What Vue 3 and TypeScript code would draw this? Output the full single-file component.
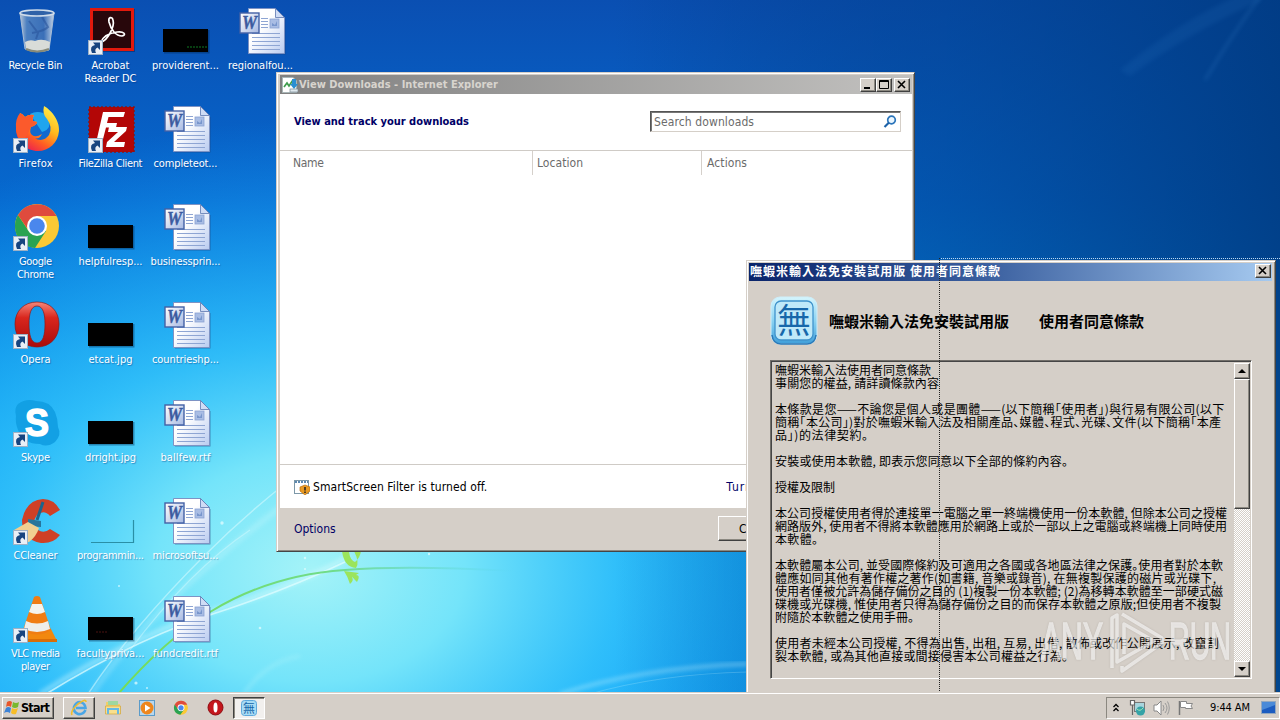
<script setup lang="ts">
type IconKind =
  | 'bin' | 'acrobat' | 'thumb' | 'word' | 'firefox' | 'filezilla'
  | 'chrome' | 'opera' | 'skype' | 'ccleaner' | 'blank' | 'vlc'

interface Shortcut {
  kind: IconKind
  col: number
  row: number
  lines: [string, number][]
  linked?: boolean
  accent?: string
}

const icons: Shortcut[] = [
  { kind: 'bin', col: 1, row: 1, lines: [['Recycle Bin', 54]] },
  { kind: 'acrobat', col: 2, row: 1, lines: [['Acrobat', 38], ['Reader DC', 52]], linked: true },
  { kind: 'thumb', col: 3, row: 1, lines: [['providerent...', 67]], accent: 'green' },
  { kind: 'word', col: 4, row: 1, lines: [['regionalfou...', 65]] },
  { kind: 'firefox', col: 1, row: 2, lines: [['Firefox', 34]], linked: true },
  { kind: 'filezilla', col: 2, row: 2, lines: [['FileZilla Client', 64]], linked: true },
  { kind: 'word', col: 3, row: 2, lines: [['completeot...', 64]] },
  { kind: 'chrome', col: 1, row: 3, lines: [['Google', 33], ['Chrome', 37]], linked: true },
  { kind: 'thumb', col: 2, row: 3, lines: [['helpfulresp...', 64]] },
  { kind: 'word', col: 3, row: 3, lines: [['businessprin...', 70]] },
  { kind: 'opera', col: 1, row: 4, lines: [['Opera', 30]], linked: true },
  { kind: 'thumb', col: 2, row: 4, lines: [['etcat.jpg', 44]] },
  { kind: 'word', col: 3, row: 4, lines: [['countrieshp...', 67]] },
  { kind: 'skype', col: 1, row: 5, lines: [['Skype', 29]], linked: true },
  { kind: 'thumb', col: 2, row: 5, lines: [['drright.jpg', 51]] },
  { kind: 'word', col: 3, row: 5, lines: [['ballfew.rtf', 50]] },
  { kind: 'ccleaner', col: 1, row: 6, lines: [['CCleaner', 44]], linked: true },
  { kind: 'blank', col: 2, row: 6, lines: [['programmin...', 67]] },
  { kind: 'word', col: 3, row: 6, lines: [['microsoftsu...', 66]] },
  { kind: 'vlc', col: 1, row: 7, lines: [['VLC media', 49], ['player', 29]], linked: true },
  { kind: 'thumb', col: 2, row: 7, lines: [['facultypriva...', 68]], accent: 'red' },
  { kind: 'word', col: 3, row: 7, lines: [['fundcredit.rtf', 65]] },
]

const licence: [string, number][] = [
  ['嘸蝦米輸入法使用者同意條款', 156],
  ['事關您的權益, 請詳讀條款內容', 164],
  ['', 0],
  ['本條款是您——不論您是個人或是團體——(以下簡稱「使用者」)與行易有限公司(以下', 450],
  ['簡稱「本公司」)對於嘸蝦米輸入法及相關產品、媒體、程式、光碟、文件(以下簡稱「本產', 446],
  ['品」)的法律契約。', 93],
  ['', 0],
  ['安裝或使用本軟體, 即表示您同意以下全部的條約內容。', 293],
  ['', 0],
  ['授權及限制', 60],
  ['', 0],
  ['本公司授權使用者得於連接單一電腦之單一終端機使用一份本軟體, 但除本公司之授權', 452],
  ['網路版外, 使用者不得將本軟體應用於網路上或於一部以上之電腦或終端機上同時使用', 452],
  ['本軟體。', 43],
  ['', 0],
  ['本軟體屬本公司, 並受國際條約及可適用之各國或各地區法律之保護。使用者對於本軟', 448],
  ['體應如同其他有著作權之著作(如書籍, 音樂或錄音), 在無複製保護的磁片或光碟下,', 441],
  ['使用者僅被允許為儲存備份之目的 (1)複製一份本軟體; (2)為移轉本軟體至一部硬式磁', 448],
  ['碟機或光碟機, 惟使用者只得為儲存備份之目的而保存本軟體之原版;但使用者不複製', 446],
  ['附隨於本軟體之使用手冊。', 139],
  ['', 0],
  ['使用者未經本公司授權, 不得為出售, 出租, 互易, 出借, 散佈或改作公開展示, 改竄割', 444],
  ['裂本軟體, 或為其他直接或間接侵害本公司權益之行為。', 293],
]

// Spreads the letters of a label so that it fills the given width.
const vFit = {
  mounted(el: HTMLElement, { value }: { value: number }) {
    const gaps = (el.textContent ?? '').length - 1
    if (gaps < 1 || !value) return
    const step = (value - el.getBoundingClientRect().width) / gaps
    el.style.letterSpacing = `${step}px`
    el.style.marginRight = `${-step}px`
  },
}
</script>

<template>
  <div class="desktop">
    <svg class="wallpaper" viewBox="0 0 1280 720" width="1280" height="720">
      <defs>
        <linearGradient id="sky" x1="0" y1="0" x2="0" y2="1">
          <stop offset="0" stop-color="#0a4fb2" />
          <stop offset=".28" stop-color="#0669cf" />
          <stop offset=".6" stop-color="#059fee" />
          <stop offset="1" stop-color="#0a9efa" />
        </linearGradient>
        <radialGradient id="glow" gradientUnits="userSpaceOnUse" cx="0" cy="0" r="1" gradientTransform="translate(310 570) scale(620 450)">
          <stop offset="0" stop-color="#a4f3f8" />
          <stop offset=".25" stop-color="#74e4fa" />
          <stop offset=".5" stop-color="#36c4fb" stop-opacity=".85" />
          <stop offset="1" stop-color="#139cf8" stop-opacity="0" />
        </radialGradient>
        <linearGradient id="shade" x1="0" y1="0" x2="1" y2="0">
          <stop offset=".48" stop-color="#00306f" stop-opacity="0" />
          <stop offset=".74" stop-color="#003f8a" stop-opacity=".5" />
          <stop offset="1" stop-color="#003a80" stop-opacity=".88" />
        </linearGradient>
        <linearGradient id="stem" x1="0" y1="0" x2="1" y2="0">
          <stop offset="0" stop-color="#76dc55" />
          <stop offset=".5" stop-color="#70dc8c" />
          <stop offset=".9" stop-color="#50cfe0" stop-opacity="0" />
        </linearGradient>
        <filter id="soft"><feGaussianBlur stdDeviation="2" /></filter>
      </defs>
      <rect width="1280" height="720" fill="url(#sky)" />
      <rect width="1280" height="720" fill="url(#glow)" />
      <rect width="1280" height="720" fill="url(#shade)" />
      <path d="M1120 70Q1180 20 1250 -10L1262 0Q1190 32 1130 76Z" fill="#3f8fd8" opacity=".1" filter="url(#soft)" />
      <path d="M1205 80Q1235 30 1262 -6" stroke="#4d9be0" stroke-width="2" opacity=".25" fill="none" filter="url(#soft)" />
      <g fill="none" stroke="#e2fdff">
        <path d="M40 694Q135 634 225 607Q300 584 350 556" stroke-width="5" opacity=".4" filter="url(#soft)" />
        <path d="M46 694Q140 636 228 609Q290 588 345 562" stroke-width="1.6" opacity=".7" />
        <path d="M88 694Q130 630 205 555Q245 515 290 480" stroke-width="1.4" opacity=".5" />
        <path d="M92 694Q150 605 290 500" stroke-width="6" opacity=".22" filter="url(#soft)" />
        <path d="M130 650Q190 570 250 530" stroke-width="1.2" opacity=".4" />
        <path d="M560 694Q640 668 748 664" stroke-width="3" opacity=".4" filter="url(#soft)" />
        <path d="M590 694Q660 674 748 672" stroke-width="1.2" opacity=".2" />
      </g>
      <path d="M118 694Q165 640 210 612Q270 575 345 570Q420 564 560 574" stroke="url(#stem)" stroke-width="2" fill="none" />
      <path d="M244 694Q265 662 300 656" stroke="#b9f6fb" stroke-width="3" fill="none" opacity=".35" filter="url(#soft)" />
      <g fill="#9be45c">
        <path d="M342 551L349 552Q350 560 355 562Q360 558 361 551L354 551Q360 563 356 568Q344 567 342 551Z" />
        <path d="M344 571L359 573L356 575Q361 575 357 582Q352 577 351 575Q355 580 350 584Q348 577 344 571Z" />
      </g>
      <g fill="#e9feff" opacity=".7">
        <circle cx="222" cy="523" r="1.7" /><circle cx="305" cy="558" r="1.2" /><circle cx="305" cy="569" r="1" />
        <circle cx="136" cy="683" r="1.6" /><circle cx="147" cy="688" r="1" /><circle cx="119" cy="586" r="1" />
        <circle cx="260" cy="628" r="1.3" /><circle cx="429" cy="554" r="1.2" />
      </g>
    </svg>

    <div class="icons">
      <div v-for="(item, i) in icons" :key="i" class="item" :style="{ gridColumn: item.col, gridRow: item.row }">
        <svg class="pic" viewBox="0 0 48 48" width="48" height="48">
          <g v-if="item.kind === 'bin'">
            <defs>
              <linearGradient id="glass" x1="0" y1="0" x2="1" y2="0">
                <stop offset="0" stop-color="#b5c4d6" /><stop offset=".2" stop-color="#4b7fc0" />
                <stop offset=".7" stop-color="#3a6fb8" /><stop offset="1" stop-color="#c3d3e6" />
              </linearGradient>
            </defs>
            <path d="M8 6L13 42Q24 47 37 43L42 6Z" fill="url(#glass)" stroke="#a8bdd6" />
            <path d="M13 35Q18 32 23 34Q30 31 38 35L37 42Q25 46 14 42Z" fill="#d9dcd8" />
            <path d="M17 14L26 26L24 32M30 10L36 20Q32 24 20 26" stroke="#2a559c" stroke-width="2" fill="none" opacity=".6" />
            <path d="M14 42Q25 47 37 42" stroke="#888a78" stroke-width="2" fill="none" />
            <ellipse cx="25" cy="6" rx="17" ry="3" fill="#2f62a8" stroke="#cfdcea" stroke-width="1.6" />
          </g>
          <g v-else-if="item.kind === 'acrobat'">
            <rect x="4" y="2" width="44" height="43" fill="#06245a" opacity=".5" />
            <rect x="3" y="1" width="44" height="43" fill="#e2190d" /><rect x="6" y="4" width="38" height="37" fill="#28070b" />
            <path d="M14 35C20 34 28 20 26 13C25 9 21 10 22 15C24 23 29 29 35 29C40 28 37 24 30 25C22 26 16 30 14 35Z" fill="none" stroke="#fff" stroke-width="1.7" />
          </g>
          <g v-else-if="item.kind === 'thumb'">
            <rect x="2" y="23" width="45.500" height="23.500" fill="#00264a" opacity=".4" />
            <rect x="1" y="22" width="45" height="23" />
            <path v-if="item.accent === 'green'" d="M25 40H46" stroke="#0f7a23" stroke-dasharray="2 1" />
            <path v-if="item.accent === 'red'" d="M9 37H20" stroke="#4b1310" stroke-dasharray="2 1" />
          </g>
          <path v-else-if="item.kind === 'blank'" d="M46.500 23V45.500H4" fill="none" stroke="#2a8fa6" stroke-width="1.200" />
          <g v-else-if="item.kind === 'word'">
            <defs>
              <linearGradient id="sheet" x1="0" y1="0" x2="1" y2="1"><stop offset=".4" stop-color="#fff" /><stop offset="1" stop-color="#b9cbf0" /></linearGradient>
              <linearGradient id="badge" x1="0" y1="0" x2="1" y2="1"><stop offset="0" stop-color="#fff" /><stop offset="1" stop-color="#a7b9e2" /></linearGradient>
            </defs>
            <path d="M13 12H48.500V47.500H13Z" fill="#1c3f7a" opacity=".5" />
            <path d="M11.500 1.500H38.500L47.500 10.500V46.500H11.500Z" fill="url(#sheet)" stroke="#7e93c4" />
            <path d="M38.500 1.500V10.500H47.500Z" fill="#cfdcf5" stroke="#5c76ae" stroke-width=".8" />
            <path d="M24 11.500H31M24 14.500H31M24 17.500H31M24 20.500H31M15 26.500H43M15 30.500H43M15 34.500H43M15 38.500H43M15 42.500H43" stroke="#8ea5d3" />
            <rect x="33" y="12" width="9" height="9" fill="#a9bde4" stroke="#8ba2d2" stroke-width=".8" /><path d="M35 19V16L38 18L40 14V19" fill="#7896cc" />
            <rect x="3" y="6" width="19" height="20" fill="url(#badge)" stroke="#4361a5" stroke-width="1.400" />
            <text x="12.500" y="22" text-anchor="middle" textLength="15" lengthAdjust="spacingAndGlyphs" class="w">W</text>
          </g>
          <g v-else-if="item.kind === 'firefox'">
            <defs>
              <linearGradient id="fox" x1=".8" y1="0" x2=".2" y2="1"><stop offset="0" stop-color="#fff04a" /><stop offset=".4" stop-color="#ffb91e" /><stop offset=".7" stop-color="#ff5c23" /><stop offset="1" stop-color="#e8155a" /></linearGradient>
            </defs>
            <circle cx="27" cy="23" r="16" fill="#1169cf" /><path d="M18 9Q27 4 36 11Q41 24 30 27Z" fill="#1fa5ee" />
            <path d="M32 1C38 4 48 15 47 26C46 38 37 46 26 46C14 46 5 37 4 25C4 18 6 15 8 12V8Q11 9 13 12Q17 9 22 10Q20 13 21 16L25 17Q25 20 19 22Q17 27 20 30Q24 33 30 29Q27 35 22 33Q31 38 37 30Q41 22 35 14Q30 9 32 1Z" fill="url(#fox)" />
            <path d="M8 8Q3 14 4 24Q5 33 10 37Q16 30 18 24L19 22Q25 20 25 17L21 16Q20 13 22 10Q17 9 13 12Q11 9 8 8Z" fill="#fb5a2c" />
          </g>
          <g v-else-if="item.kind === 'filezilla'">
            <rect x="2" y="2" width="45" height="45" fill="#b30606" stroke="#8c1414" stroke-dasharray="2 2" stroke-width="1.500" />
            <path d="M16 7H38L36.500 12H21.500L20 18H30L29 22.500H19L15 38H9Z" fill="#fff" />
            <path d="M22 22H40L39 26L27 37H38L37 42H19L20 37L31 27H21Z" fill="#fff" />
          </g>
          <g v-else-if="item.kind === 'chrome'">
            <circle cx="25" cy="23" r="22" fill="#fbc934" />
            <path d="M6 12A22 22 0 0 0 23 45L34 28L25 23L16 27Z" fill="#29a352" />
            <path d="M6 12A22 22 0 0 1 44.500 13H25L15 25Z" fill="#df4b3d" />
            <circle cx="25" cy="23" r="10" fill="#fff" /><circle cx="25" cy="23" r="7.800" fill="#4a87ed" />
          </g>
          <g v-else-if="item.kind === 'opera'">
            <defs><linearGradient id="op" x1="0" y1="0" x2="0" y2="1"><stop offset="0" stop-color="#f4877a" /><stop offset=".35" stop-color="#d9261d" /><stop offset="1" stop-color="#a90b0b" /></linearGradient></defs>
            <path fill-rule="evenodd" d="M25 1C38 1 47 10 47 23C47 37 38 46 25 46C12 46 3 37 3 23C3 10 12 1 25 1ZM25 5C19 5 17 13 17 23C17 34 19 42 25 42C31 42 33 34 33 23C33 13 31 5 25 5Z" fill="url(#op)" stroke="#8e1717" stroke-width=".7" />
          </g>
          <g v-else-if="item.kind === 'skype'">
            <path d="M6 5Q14 -1 24 2Q38 2 43 13Q46 20 46 28Q50 36 43 43Q35 49 28 45Q11 45 6 31Q3 23 4 17Q2 9 6 5Z" fill="#12a0e4" />
            <text x="25" y="37" text-anchor="middle" textLength="24" lengthAdjust="spacingAndGlyphs" class="s">S</text>
          </g>
          <g v-else-if="item.kind === 'ccleaner'">
            <path d="M48 13L38 19Q32 12 25 18Q19 26 26 33Q32 37 38 32L48 38Q41 47 29 46Q10 43 10 23Q14 3 31 2Q42 2 48 13Z" fill="#cf4026" />
            <path d="M31 5L25 23" stroke="#1c648c" stroke-width="3" /><path d="M16 22L29 24V30L16 29Z" fill="#28759b" />
            <path d="M16 25L27 31Q24 40 17 45L4 44Q0 38 2 33Z" fill="#f1cf91" />
          </g>
          <g v-else>
            <path d="M11 34H39L45 46H7Z" fill="#f2880f" /><path d="M7 44L45 44V47H7Z" fill="#d96e08" />
            <path d="M22 2Q25 0 28 2L39 35Q25 44 11 35Z" fill="#f07d13" />
            <path d="M20 9H30L33 17Q25 21 17 17Z" fill="#f4f4ee" /><path d="M14 26Q25 31 36 26L38 34Q25 40 12 34Z" fill="#eeeeea" />
          </g>
          <g v-if="item.linked">
            <rect x="1.500" y="33.500" width="14" height="14" fill="#e9eff6" stroke="#9db1c6" />
            <path d="M5 46Q2 39 8 38L6 35.500H13V43L10.500 40.500Q7 42 9 46Z" fill="#17447f" />
          </g>
        </svg>
        <span v-for="line in item.lines" :key="line[0]" v-fit="line[1]" class="name">{{ line[0] }}</span>
      </div>
    </div>

    <section class="win downloads">
      <header class="bar">
        <svg width="16" height="16" viewBox="0 0 16 16">
          <path d="M.5.5H11L14.500 4V15.500H.5Z" fill="#fff" stroke="#a9b7b8" /><path d="M2 10L5 6L7 9L11 3" stroke="#3e9c4c" stroke-width="1.700" fill="none" />
          <path d="M10 2H14V7H16L12 12L8 7H10Z" fill="#2b8fd2" /><rect x="8" y="12" width="8" height="3" fill="#dfe9ee" stroke="#7b8b94" stroke-width=".7" />
        </svg>
        <b v-fit="199">View Downloads - Internet Explorer</b>
        <span class="grow"></span>
        <svg class="key" width="16" height="14" viewBox="0 0 14 12"><path d="M3 9H9" stroke="#000" stroke-width="2" /></svg>
        <svg class="key" width="16" height="14" viewBox="0 0 14 12"><path d="M2.500 1.500H11.500V9.500H2.500ZM2 2.500H12" stroke="#000" fill="none" /></svg>
        <svg class="key apart" width="16" height="14" viewBox="0 0 14 12"><path d="M3 2L10 9M10 2L3 9" stroke="#000" stroke-width="1.600" /></svg>
      </header>
      <div class="top">
        <b v-fit="175">View and track your downloads</b>
        <div class="search">
          <span v-fit="100">Search downloads</span>
          <svg width="14" height="14" viewBox="0 0 14 14"><circle cx="8.500" cy="5" r="3.800" fill="#eaf6ff" stroke="#2a74ba" stroke-width="1.700" /><path d="M6 7.500L1.500 12" stroke="#1d62a8" stroke-width="2.200" /></svg>
        </div>
      </div>
      <div class="cols">
        <div><span v-fit="31">Name</span></div>
        <div><span v-fit="46">Location</span></div>
        <div><span v-fit="40">Actions</span></div>
      </div>
      <div class="filter">
        <svg width="16" height="16" viewBox="0 0 16 16">
          <rect x=".5" y="1.500" width="14" height="13" fill="#fff" stroke="#7d98a8" /><path d="M1 3H14" stroke="#5c88b0" stroke-width="2" stroke-dasharray="2 1" />
          <path d="M11 6L16 8V12L11 16L6 12V8Z" fill="#eb9a22" stroke="#b8700e" stroke-width=".7" /><path d="M11 8V11.500M11 12.500V14" stroke="#222" stroke-width="1.500" />
        </svg>
        <span v-fit="175">SmartScreen Filter is turned off.</span>
        <a v-fit="166">Turn on SmartScreen Filter</a>
      </div>
      <footer class="foot">
        <a v-fit="42">Options</a>
        <div class="push"><span v-fit="48">Clear list</span></div>
      </footer>
    </section>

    <svg class="frame" width="342" height="435" viewBox="0 0 342 435">
      <path d="M0 .5H341" stroke="#b9d8f2" stroke-dasharray="1 1" />
    </svg>

    <section class="win terms">
      <header class="bar blue">
        <b v-fit="250">嘸蝦米輸入法免安裝試用版 使用者同意條款</b>
        <span class="grow"></span>
        <svg class="key" width="16" height="14" viewBox="0 0 14 12"><path d="M3 2L10 9M10 2L3 9" stroke="#000" stroke-width="1.600" /></svg>
      </header>
      <div class="head">
        <svg width="48" height="50" viewBox="0 0 48 50">
          <defs><linearGradient id="tile" x1="0" y1="0" x2="0" y2="1"><stop offset="0" stop-color="#d4f5fd" /><stop offset=".5" stop-color="#8cd3f2" /><stop offset="1" stop-color="#3f9fda" /></linearGradient></defs>
          <rect x="1" y="1" width="46" height="47" rx="9" fill="url(#tile)" stroke="#cdeefa" />
          <path d="M2 39Q3 48 11 48H37Q45 48 46 39" fill="none" stroke="#2c79b8" stroke-width="1.500" />
          <rect x="5" y="5" width="38" height="39" rx="6" fill="#bfe9f9" stroke="#3f93cc" stroke-width="1.300" />
          <text x="24" y="37" text-anchor="middle" class="wu">無</text>
        </svg>
        <h1><span v-fit="180">嘸蝦米輸入法免安裝試用版</span><span v-fit="105">使用者同意條款</span></h1>
      </div>
      <div class="paper">
        <div class="text">
          <p v-for="(line, i) in licence" :key="i"><span v-fit="line[1]">{{ line[0] }}</span></p>
        </div>
        <div class="scroll">
          <i><svg width="8" height="4" viewBox="0 0 8 4"><path d="M0 4L4 0L8 4Z" /></svg></i>
          <i class="thumb"></i>
          <span class="grow"></span>
          <i><svg width="8" height="4" viewBox="0 0 8 4"><path d="M0 0L4 4L8 0Z" /></svg></i>
        </div>
      </div>
    </section>

    <svg class="rule" width="1" height="435" viewBox="0 0 1 435"><path d="M.5 0V435" stroke="#222" stroke-dasharray="1 1" /></svg>

    <svg class="mark" width="200" height="66" viewBox="0 0 200 66">
      <g fill="#fff" opacity=".6">
        <text x="3" y="49" textLength="62" lengthAdjust="spacingAndGlyphs">ANY</text>
        <text x="131" y="49" textLength="62" lengthAdjust="spacingAndGlyphs">RUN</text>
      </g>
      <path d="M74 58V8L79 5V52L116 31L86 14V44M84 4L124 28V33L84 61V56" fill="none" stroke="#fff" stroke-width="3.500" stroke-linejoin="round" opacity=".6" />
    </svg>

    <nav class="taskbar">
      <button class="start">
        <svg width="17" height="16" viewBox="0 0 17 16">
          <path d="M3 2Q6 0 8 2L7 7Q4 5 2 7Z" fill="#e8562a" /><path d="M9 2Q12 4 15 2L14 7Q11 9 8 7Z" fill="#79b82e" />
          <path d="M2 8Q4 6 7 8L6 13Q3 11 0 13Z" fill="#3d83d6" /><path d="M8 8Q11 10 14 8L12 14Q9 15 7 13Z" fill="#f7bd27" />
        </svg>
        <b v-fit="29">Start</b>
      </button>
      <div class="task up">
        <svg width="18" height="18" viewBox="0 0 18 18"><path d="M15.500 11Q13 16 8 15Q3 13 4 8Q6 3 10 3Q15 4 15.500 9H6" fill="none" stroke="#4aa6e6" stroke-width="2.600" /><path d="M2 16Q0 12 8 5Q16 -1 16 3" fill="none" stroke="#f0bd2c" stroke-width="1.600" /></svg>
      </div>
      <div class="task">
        <svg width="18" height="18" viewBox="0 0 18 18"><path d="M2 3H7L8 5H16V15H2Z" fill="#f0cf6a" /><path d="M4 2H14V6H4Z" fill="#9ed7a0" /><path d="M1.500 7H16.500V15H1.500Z" fill="#f8df8d" stroke="#d5ab42" stroke-width=".8" /><path d="M5 15V11H13V15H15V9H3V15Z" fill="#67b8e4" /></svg>
      </div>
      <div class="task">
        <svg width="18" height="18" viewBox="0 0 18 18"><rect x="1.500" y="1.500" width="15" height="15" fill="#b8d7ee" stroke="#5b9bc9" /><circle cx="9" cy="9" r="6.500" fill="#ee861d" /><path d="M7 5.500L12.500 9L7 12.500Z" fill="#fff" /></svg>
      </div>
      <div class="task">
        <svg width="16" height="16" viewBox="2 1 46 45"><circle cx="25" cy="23" r="20" fill="#fbc934" /><path d="M8 12A20 20 0 0 0 23 43L34 28L16 27Z" fill="#29a352" /><path d="M7 14A20 20 0 0 1 43 14H25L15 25Z" fill="#df4b3d" /><circle cx="25" cy="23" r="10" fill="#fff" /><circle cx="25" cy="23" r="7.500" fill="#4a87ed" /></svg>
      </div>
      <div class="task">
        <svg width="17" height="17" viewBox="0 0 17 17"><circle cx="8.500" cy="8.500" r="7.500" fill="#c4161c" stroke="#8d0b10" /><ellipse cx="8.500" cy="8.500" rx="2" ry="5" fill="#fff" /></svg>
      </div>
      <div class="task down">
        <svg width="18" height="18" viewBox="0 0 18 18"><rect x="1.500" y="1.500" width="15" height="15" rx="3" fill="#a8dcf5" stroke="#5fa9dc" /><text x="9" y="13.500" text-anchor="middle" class="wu tiny">無</text></svg>
      </div>
      <span class="grow"></span>
      <div class="tray">
        <svg width="8" height="10" viewBox="0 0 8 10"><path d="M1.500 4L4 1.500L6.500 4M1.500 8L4 5.500L6.500 8" fill="none" stroke="#000" stroke-width="1.300" /></svg>
        <svg class="net" width="17" height="16" viewBox="0 0 17 16"><rect x="5.500" y="2.500" width="10" height="9" fill="#a8d5dd" stroke="#777" /><path d="M1.500.5V5H5.500V.5ZM3.500 5V15" fill="#fff" stroke="#666" stroke-width="1.200" /><circle cx="11.500" cy="11" r="4.500" fill="#35a3a7" /><path d="M8 9Q11 12 14 8" fill="none" stroke="#a4e6b5" /></svg>
        <svg class="vol" width="17" height="16" viewBox="0 0 17 16"><path d="M1 5H4L8 1V15L4 11H1Z" fill="#fff" stroke="#888" /><path d="M10 5Q12 8 10 11M12 3Q16 8 12 13M14.500 1.500Q18 8 14.500 14.500" fill="none" stroke="#999" /></svg>
        <svg class="flag" width="16" height="16" viewBox="0 0 16 16"><path d="M1.500 1V15" stroke="#777" stroke-width="1.500" /><path d="M2.500 1.500H8.500V3.500H14.500L13 6L14.500 8.500H7.500V7.500H2.500Z" fill="#fff" stroke="#888" /></svg>
        <span v-fit="40" class="clock">9:44 AM</span>
        <svg class="peek" width="15" height="13" viewBox="0 0 15 13"><rect x=".5" y=".5" width="14" height="12" fill="#1c5cc0" stroke="#93a8bf" /><path d="M1 1H14V4L1 9Z" fill="#4a8ad8" /></svg>
      </div>
    </nav>
  </div>
</template>

<style>
html, body { margin: 0; overflow: hidden; }
</style>

<style scoped>
.desktop {
  position: relative; width: 1280px; height: 720px; overflow: hidden;
  font-family: "DejaVu Sans Condensed", "DejaVu Sans", "Noto Sans CJK JP", sans-serif; font-size: 11px; color: #000;
  --face: #d5cfc8;
}
.wallpaper { position: absolute; left: 0; top: 0; }
span, b, a { white-space: pre; }
.grow { flex: 1; }

.icons { position: relative; display: grid; grid-template-columns: repeat(4, 75px); grid-template-rows: repeat(7, 98px); width: 300px; margin-left: -2px; }
.item { display: flex; flex-direction: column; align-items: center; padding-top: 7px; }
.pic { overflow: visible; margin-bottom: 4px; flex: none; }
.name { line-height: 13px; color: #fff; text-shadow: 1px 1px 1px rgba(0, 40, 110, .4); }
.w { font: italic bold 19px "Liberation Serif", serif; fill: #3c5ba0; stroke: #3c5ba0; stroke-width: .4px; }
.s { font: bold 38px "Liberation Sans", sans-serif; fill: #fff; stroke: #fff; stroke-width: 1.500px; }

.win { position: absolute; box-sizing: border-box; background: var(--face); border: 1px solid; border-color: #d5cfc8 #454545 #454545 #d5cfc8; box-shadow: inset 1px 1px #fff, inset -1px -1px #8b8880; display: flex; flex-direction: column; }
.downloads { left: 276px; top: 72px; width: 639px; height: 480px; padding: 2px 2px 2px 3px; font-size: 12px; }
.bar { display: flex; align-items: center; height: 19px; flex: none; box-sizing: border-box; padding: 0 2px 0 2px; background: linear-gradient(90deg, #808080, #c2c1bf); color: #d8d4ce; font-size: 11px; }
.bar b { margin-left: 1px; }
.key { box-sizing: border-box; background: var(--face); border: 1px solid; border-color: #fff #404040 #404040 #fff; box-shadow: inset -1px -1px #8b8880; }
.apart { margin-left: 2px; }
.top { display: flex; justify-content: space-between; align-items: center; height: 56px; box-sizing: border-box; padding: 0 11px 2px 14px; background: #fff; color: #000066; font-size: 11px; }
.search { display: flex; justify-content: space-between; align-items: center; width: 251px; height: 21px; box-sizing: border-box; border: 1px solid; border-color: #555 #d5cfc8 #d5cfc8 #555; box-shadow: inset 1px 1px #777; padding: 1px 3px 0 3px; color: #6b6b6b; font-size: 12px; }
.cols { display: flex; flex: 1; background: #fff; border-top: 1px solid #cfcbc6; color: #6b6b6b; align-items: flex-start; }
.cols div { height: 24px; line-height: 24px; box-sizing: border-box; padding-left: 5px; border-left: 1px solid #d5d0cb; }
.cols div:nth-child(1) { width: 252px; padding-left: 13px; border: 0; }
.cols div:nth-child(2) { width: 169px; padding-left: 4px; }
.filter { display: flex; align-items: center; height: 44px; box-sizing: border-box; background: #fff; border-top: 1px solid #cfcbc6; padding-left: 14px; }
.filter span { margin-left: 3px; }
.filter a { margin-left: 239px; }
a { color: #000066; }
.foot { display: flex; align-items: center; height: 41px; padding-left: 14px; }
.foot a { width: 42px; }
.push { display: flex; align-items: center; justify-content: center; margin-left: 382px; width: 90px; height: 25px; box-sizing: border-box; border: 1px solid; border-color: #fff #404040 #404040 #fff; box-shadow: inset -1px -1px #8b8880; }

.terms { left: 746px; top: 260px; width: 530px; height: 470px; padding: 2px 3px; }
.blue { margin-left: -1px; height: 18px; background: linear-gradient(90deg, #0a246a, #3a5f9f 45%, #a6caf0); color: #fff; font-family: "Noto Sans CJK TC", sans-serif; font-size: 12px; line-height: 16px; padding: 0 1px 2px 0; }
.head { display: flex; align-items: center; height: 79px; padding-left: 20px; }
.head h1 { display: flex; gap: 30px; margin: 0 0 0 11px; font: bold 15px/20px "Noto Sans CJK TC", sans-serif; }
.wu { font: 400 34px "Noto Sans CJK TC", sans-serif; fill: #1767aa; }
.wu.tiny { font-size: 12px; }
.paper { display: flex; margin-left: 20px; width: 482px; height: 319px; flex: none; box-sizing: border-box; border: 1px solid; border-color: #716e69 #fff #fff #716e69; box-shadow: inset 1px 1px #454545; padding: 2px 1px 1px 4px; }
.text { flex: 1; font-family: "Noto Sans CJK JP", sans-serif; font-size: 12px; font-feature-settings: "halt"; }
.text p { margin: 0; height: 13px; line-height: 13px; }
.text span { display: inline-block; }
.scroll { display: flex; flex-direction: column; width: 16px; background: repeating-conic-gradient(#fff 0 25%, #d5cfc8 0 50%) 0 0 / 2px 2px; }
.scroll i { display: flex; align-items: center; justify-content: center; height: 16px; box-sizing: border-box; background: var(--face); border: 1px solid; border-color: #fff #404040 #404040 #fff; box-shadow: inset -1px -1px #8b8880; }
.scroll .thumb { height: 130px; }
.frame { position: absolute; left: 939px; top: 258px; }
.rule { position: absolute; left: 939px; top: 258px; }
.mark { position: absolute; left: 1038px; top: 610px; font: 51px "Liberation Sans", sans-serif; filter: drop-shadow(0 0 1px rgba(120, 115, 110, .4)); }
.mark text { stroke: #fff; stroke-width: 1.500px; }

.taskbar { position: absolute; left: 0; top: 692px; width: 1280px; height: 28px; box-sizing: border-box; display: flex; align-items: center; background: var(--face); border-top: 1px solid var(--face); box-shadow: inset 0 1px #fff; padding: 2px 0 0 2px; }
.start { display: flex; align-items: center; width: 52px; height: 22px; padding: 0 0 0 1px; margin-right: 9px; font: 12.500px "DejaVu Sans Condensed", sans-serif; color: #000; background: var(--face); border: 1px solid; border-color: #fff #404040 #404040 #fff; box-shadow: inset -1px -1px #8b8880; box-sizing: border-box; }
.task { display: flex; align-items: center; justify-content: center; width: 32px; height: 22px; box-sizing: border-box; margin-right: 2px; border: 1px solid transparent; }
.up { border-color: #fff #404040 #404040 #fff; box-shadow: inset -1px -1px #8b8880; }
.down { border-color: #404040 #fff #fff #404040; background: #f2f0ee; box-shadow: inset 1px 1px #8b8880; }
.tray { display: flex; align-items: center; width: 174px; height: 22px; box-sizing: border-box; border: 1px solid; border-color: #8b8880 #fff #fff #8b8880; padding-left: 5px; }
.net { margin-left: 9px; }
.vol { margin-left: 7px; }
.flag { margin-left: 8px; }
.clock { margin-left: 16px; }
.peek { margin-left: auto; margin-right: 3px; }
</style>
